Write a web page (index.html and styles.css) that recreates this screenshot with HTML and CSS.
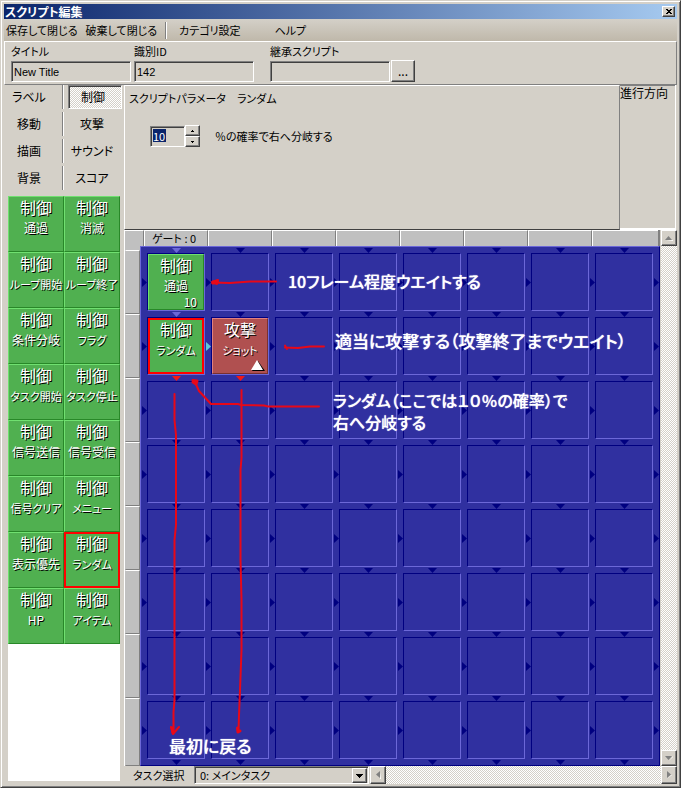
FILE: index.html
```html
<!DOCTYPE html>
<html lang="ja">
<head>
<meta charset="utf-8">
<title>スクリプト編集</title>
<link rel="stylesheet" href="styles.css">
</head>
<body>
<div class="window">
  <header class="titlebar">
    <h1>スクリプト編集</h1>
    <button class="close" type="button" aria-label="閉じる"><svg width="6" height="5" viewBox="0 0 6 5" shape-rendering="crispEdges"><path d="M0 0h2v1h2v-1h2v1h-1v1h-1v1h1v1h1v1h-2v-1h-2v1h-2v-1h1v-1h1v-1h-1v-1h-1z"/></svg></button>
  </header>
  <nav class="menubar">
    <button type="button">保存して閉じる</button>
    <button type="button">破棄して閉じる</button>
    <span class="divider"></span>
    <button type="button" class="wide">カテゴリ設定</button>
    <button type="button" class="wide">ヘルプ</button>
  </nav>
  <section class="fields">
    <div class="field"><label for="title">タイトル</label><input id="title" value="New Title"></div>
    <div class="field"><label for="ident">識別ID</label><input id="ident" value="142"></div>
    <div class="field parent"><label for="parent">継承スクリプト</label><input id="parent"></div>
    <button class="browse" type="button">...</button>
  </section>
  <div class="body">
    <aside class="side">
      <div class="tabs">
        <button type="button">ラベル</button><span class="divider"></span><button type="button" class="on">制御</button>
        <button type="button">移動</button><span class="divider"></span><button type="button">攻撃</button>
        <button type="button">描画</button><span class="divider"></span><button type="button">サウンド</button>
        <button type="button">背景</button><span class="divider"></span><button type="button">スコア</button>
      </div>
      <div class="palette">
        <button type="button" class="tile"><b>制御</b><span>通過</span></button>
        <button type="button" class="tile"><b>制御</b><span>消滅</span></button>
        <button type="button" class="tile kana"><b>制御</b><span>ループ開始</span></button>
        <button type="button" class="tile kana"><b>制御</b><span>ループ終了</span></button>
        <button type="button" class="tile"><b>制御</b><span>条件分岐</span></button>
        <button type="button" class="tile kana"><b>制御</b><span>フラグ</span></button>
        <button type="button" class="tile kana"><b>制御</b><span>タスク開始</span></button>
        <button type="button" class="tile kana"><b>制御</b><span>タスク停止</span></button>
        <button type="button" class="tile"><b>制御</b><span>信号送信</span></button>
        <button type="button" class="tile"><b>制御</b><span>信号受信</span></button>
        <button type="button" class="tile kana"><b>制御</b><span>信号クリア</span></button>
        <button type="button" class="tile kana"><b>制御</b><span>メニュー</span></button>
        <button type="button" class="tile"><b>制御</b><span>表示優先</span></button>
        <button type="button" class="tile kana selected"><b>制御</b><span>ランダム</span></button>
        <button type="button" class="tile"><b>制御</b><span>HP</span></button>
        <button type="button" class="tile kana"><b>制御</b><span>アイテム</span></button>
      </div>
    </aside>
    <main class="main">
      <div class="top">
        <section class="params">
          <h2>スクリプトパラメータ　ランダム</h2>
          <div class="chance">
            <input id="chance" value="10">
            <span class="spin">
              <button type="button" aria-label="増やす"><svg width="3" height="2" viewBox="0 0 3 2" shape-rendering="crispEdges"><path d="M1 0h1v1h1v1h-3v-1h1z"/></svg></button>
              <button type="button" aria-label="減らす"><svg width="3" height="2" viewBox="0 0 3 2" shape-rendering="crispEdges"><path d="M0 0h3v1h-1v1h-1v-1h-1z"/></svg></button>
            </span>
            <label for="chance">％の確率で右へ分岐する</label>
          </div>
        </section>
        <section class="direction">進行方向</section>
      </div>
      <div class="canvas">
        <div class="colheads"><span class="corner"></span><span>ゲート : 0</span><span></span><span></span><span></span><span></span><span></span><span></span><span></span></div>
        <div class="rowheads"><span></span><span></span><span></span><span></span><span></span><span></span><span></span><span></span></div>
        <div class="board">
          <div class="slots">
            <div class="slot lit-down"><div class="box"><div class="tile"><b>制御</b><span>通過</span><em>10</em></div></div></div><div class="slot"><div class="box"></div></div><div class="slot"><div class="box"></div></div><div class="slot"><div class="box"></div></div><div class="slot"><div class="box"></div></div><div class="slot"><div class="box"></div></div><div class="slot"><div class="box"></div></div><div class="slot"><div class="box"></div></div><div class="slot edge-right"></div>
            <div class="slot lit-down"><div class="box"><div class="tile kana selected"><b>制御</b><span>ランダム</span></div></div></div><div class="slot branch"><div class="box"><div class="tile kana attack"><b>攻撃</b><span>ショット</span><svg class="mark" width="14" height="11" viewBox="0 0 14 11"><path d="M7 1l7 10h-13z" fill="#000"/><path d="M6 0l6 10h-12z" fill="#fff"/></svg></div></div></div><div class="slot"><div class="box"></div></div><div class="slot"><div class="box"></div></div><div class="slot"><div class="box"></div></div><div class="slot"><div class="box"></div></div><div class="slot"><div class="box"></div></div><div class="slot"><div class="box"></div></div><div class="slot edge-right"></div>
            <div class="slot red-down"><div class="box"></div></div><div class="slot red-down"><div class="box"></div></div><div class="slot"><div class="box"></div></div><div class="slot"><div class="box"></div></div><div class="slot"><div class="box"></div></div><div class="slot"><div class="box"></div></div><div class="slot"><div class="box"></div></div><div class="slot"><div class="box"></div></div><div class="slot edge-right"></div>
            <div class="slot"><div class="box"></div></div><div class="slot"><div class="box"></div></div><div class="slot"><div class="box"></div></div><div class="slot"><div class="box"></div></div><div class="slot"><div class="box"></div></div><div class="slot"><div class="box"></div></div><div class="slot"><div class="box"></div></div><div class="slot"><div class="box"></div></div><div class="slot edge-right"></div>
            <div class="slot"><div class="box"></div></div><div class="slot"><div class="box"></div></div><div class="slot"><div class="box"></div></div><div class="slot"><div class="box"></div></div><div class="slot"><div class="box"></div></div><div class="slot"><div class="box"></div></div><div class="slot"><div class="box"></div></div><div class="slot"><div class="box"></div></div><div class="slot edge-right"></div>
            <div class="slot"><div class="box"></div></div><div class="slot"><div class="box"></div></div><div class="slot"><div class="box"></div></div><div class="slot"><div class="box"></div></div><div class="slot"><div class="box"></div></div><div class="slot"><div class="box"></div></div><div class="slot"><div class="box"></div></div><div class="slot"><div class="box"></div></div><div class="slot edge-right"></div>
            <div class="slot"><div class="box"></div></div><div class="slot"><div class="box"></div></div><div class="slot"><div class="box"></div></div><div class="slot"><div class="box"></div></div><div class="slot"><div class="box"></div></div><div class="slot"><div class="box"></div></div><div class="slot"><div class="box"></div></div><div class="slot"><div class="box"></div></div><div class="slot edge-right"></div>
            <div class="slot"><div class="box"></div></div><div class="slot"><div class="box"></div></div><div class="slot"><div class="box"></div></div><div class="slot"><div class="box"></div></div><div class="slot"><div class="box"></div></div><div class="slot"><div class="box"></div></div><div class="slot"><div class="box"></div></div><div class="slot"><div class="box"></div></div><div class="slot edge-right"></div>
            <div class="slot edge-bottom"></div><div class="slot edge-bottom"></div><div class="slot edge-bottom"></div><div class="slot edge-bottom"></div><div class="slot edge-bottom"></div><div class="slot edge-bottom"></div><div class="slot edge-bottom"></div><div class="slot edge-bottom"></div>
          </div>
          <svg class="strokes" width="520" height="520" viewBox="140 246 520 520" fill="none" stroke="#e80818" stroke-width="2" stroke-linecap="round" stroke-linejoin="round">
            <path d="M276 281.500L250 281.500L230 283L213 282.500M218 280L213 282.500L217 284"/>
            <path d="M213 282.500L217 281.500" stroke-width="4"/>
            <path d="M324 346.500L310 346.500L298 348L285 347.500M285 345.500L287 349"/>
            <path d="M319 406.500L268 406.500L264 405.500L241 405L238 404L211 404L199 391L195 382"/>
            <path d="M193 380.500L197 381L196 384L193 382" stroke-width="3"/>
            <path d="M174.500 394L174.500 420L176 435L176 525L174.500 540L174.500 700L173.500 712L173.500 733M171 727L173 734L179 727"/>
            <path d="M172 728L173 733" stroke-width="3"/>
            <path d="M241.500 390L241.500 458L240.500 470L240.500 560L241.500 600L241.500 650L240 690L239 715L238.500 731"/>
            <path d="M237.500 728L238 732L240 731" stroke-width="3"/>
          </svg>
          <p class="note note-wait">10フレーム程度ウエイトする</p>
          <p class="note large note-attack">適当に攻撃する（攻撃終了までウエイト）</p>
          <p class="note note-random">ランダム（ここでは１０％の確率）で<br>右へ分岐する</p>
          <p class="note large note-back">最初に戻る</p>
        </div>
        <div class="vscroll">
          <button type="button" aria-label="上へ"><svg width="8" height="5" viewBox="0 0 8 5"><path d="M1 5h7v-1z" fill="#fff"/><path d="M0 4l3.500-4l3.500 4z" fill="#808080"/></svg></button>
          <button type="button" aria-label="下へ"><svg width="8" height="5" viewBox="0 0 8 5"><path d="M4 5l4-4v-1z" fill="#fff"/><path d="M0 0h7l-3.500 4z" fill="#808080"/></svg></button>
        </div>
      </div>
      <div class="bottom">
        <label for="task">タスク選択</label>
        <div class="combo">
          <select id="task"><option>0: メインタスク</option></select>
          <span class="drop"><svg width="7" height="4" viewBox="0 0 7 4" shape-rendering="crispEdges"><path d="M0 0h7v1h-1v1h-1v1h-1v1h-1v-1h-1v-1h-1v-1h-1z"/></svg></span>
        </div>
        <div class="hscroll">
          <button type="button" aria-label="左へ"><svg width="5" height="8" viewBox="0 0 5 8"><path d="M5 1v7l-1 0z" fill="#fff"/><path d="M4 0v7l-4-3.500z" fill="#808080"/></svg></button>
          <button type="button" aria-label="右へ"><svg width="5" height="8" viewBox="0 0 5 8"><path d="M0 8l5-4h-1z" fill="#fff"/><path d="M0 0v7l4-3.500z" fill="#808080"/></svg></button>
        </div>
      </div>
    </main>
  </div>
</div>
</body>
</html>
```
FILE: styles.css
```css
* { box-sizing: border-box; }

:root {
  --face: #d4d0c8;
  --shade: #808080;
  --dark: #404040;
  --navy: #000080;
  --lilac: #6c68d8;
}

body {
  margin: 0;
  background: var(--face);
  color: #000;
  font: 12px/16px "Noto Sans CJK JP", "Liberation Sans", sans-serif;
  font-feature-settings: "palt";
}

button, input, select {
  margin: 0;
  padding: 0;
  border: 0;
  border-radius: 0;
  background: none;
  color: inherit;
  font: inherit;
  font-feature-settings: inherit;
}

svg { display: block; }

.window {
  display: flex;
  flex-direction: column;
  min-height: 100vh;
  padding: 3px 3px 2px;
  border: 1px solid;
  border-color: var(--face) var(--dark) var(--dark) var(--face);
  box-shadow: inset 1px 1px #fff, inset -1px -1px var(--shade);
}

.close, .browse, .spin button, .drop, .vscroll button, .hscroll button {
  display: flex;
  align-items: center;
  justify-content: center;
  background: var(--face);
  border: 1px solid;
  border-color: #fff var(--dark) var(--dark) #fff;
  box-shadow: inset -1px -1px var(--shade);
}

.titlebar {
  display: flex;
  align-items: center;
  justify-content: space-between;
  height: 15px;
  padding: 0 2px 0 1px;
  background: linear-gradient(90deg, #0a246a, #a6caf0);
}

.titlebar h1 {
  margin: 0;
  color: #fff;
  font-size: 12px;
  font-weight: 700;
  line-height: 15px;
}

.close { width: 13px; height: 11px; }

.menubar {
  display: flex;
  align-items: center;
  height: 22px;
  padding: 0 2px;
  gap: 8px;
  background: linear-gradient(#d4d0c8, #bfb8aa);
  font-size: 11px;
}

.menubar .wide { padding: 0 12px 0 4px; }
.menubar .wide + .wide { padding-left: 14px; }

.divider {
  width: 2px;
  height: 17px;
  border-left: 1px solid var(--shade);
  border-right: 1px solid #fff;
}

.fields {
  display: flex;
  align-items: flex-end;
  height: 44px;
  padding: 0 6px 2px;
  border: 1px solid;
  border-color: #fff var(--shade) var(--shade) #fff;
}

.field { width: 120px; margin-right: 3px; }
.field.parent { margin-left: 13px; margin-right: 1px; }
.field label { display: block; line-height: 16px; padding-bottom: 2px; font-size: 11px; }

.field input {
  display: block;
  width: 100%;
  height: 21px;
  padding: 0 2px;
  border: 1px solid;
  border-color: var(--shade) #fff #fff var(--shade);
  box-shadow: inset 1px 1px var(--dark);
  font-family: "Liberation Sans", sans-serif;
  font-size: 11px;
}

.browse { width: 24px; height: 22px; }

.body { display: flex; flex: 1; }

.side {
  display: flex;
  flex-direction: column;
  width: 116px;
  margin-right: 4px;
  padding: 0 0 4px 4px;
}

.tabs {
  display: grid;
  grid-template-columns: 50px 2px 54px;
  grid-auto-rows: 24px;
  column-gap: 4px;
  row-gap: 3px;
  align-items: center;
  margin-bottom: 6px;
}

.tabs button { height: 24px; padding-right: 8px; }
.tabs .divider { height: 24px; }
.tabs .divider + button { padding: 0 6px 0 0; }

.tabs .divider + .on {
  padding: 0 4px 0 0;
  border: 1px solid;
  border-color: var(--shade) #fff #fff var(--shade);
  box-shadow: inset 1px 1px var(--dark);
  background: repeating-conic-gradient(#fff 0 25%, #d4d0c8 0 50%) 0 0 / 2px 2px;
}

.palette {
  display: grid;
  grid-template-columns: repeat(2, 56px);
  grid-auto-rows: 56px;
  flex: 1;
  background: #fff;
}

.tile {
  display: flex;
  flex-direction: column;
  align-items: center;
  width: 56px;
  height: 56px;
  padding: 2px 0 0;
  border: 1px solid;
  border-color: #70e070 #288828 #288828 #70e070;
  background: #50b050;
  color: #fff;
  text-shadow: 1px 1px #000;
  white-space: nowrap;
}

.tile b { font-size: 16px; font-weight: 400; line-height: 16px; }
.tile span { margin-top: 5px; font-size: 12px; line-height: 16px; }
.tile.kana span { font-size: 11px; }
.tile em { align-self: flex-end; padding-right: 6px; font-style: normal; line-height: 16px; }
.tile .mark { align-self: flex-end; margin: 2px 2px 0 0; }
.tile.selected { border: 2px solid #f00; padding-top: 1px; }
.tile.attack { background: #b05050; border-color: #e08080 #783030 #783030 #e08080; }

.main { display: flex; flex-direction: column; flex: 1; min-width: 0; }

.top { display: flex; height: 145px; }

.params {
  flex: 1;
  padding: 4px;
  border: 1px solid;
  border-color: #fff var(--shade) var(--dark) #fff;
}

.params h2 { margin: 0; font-size: 11px; font-weight: 400; line-height: 16px; }

.chance { display: flex; align-items: center; padding: 19px 0 0 21px; }

.chance input {
  width: 35px;
  height: 21px;
  padding: 0 2px;
  border: 1px solid;
  border-color: var(--shade) #fff #fff var(--shade);
  box-shadow: inset 1px 1px var(--dark);
  background: linear-gradient(#0a246a, #0a246a) 2px 2px / 13px 13px no-repeat;
  color: #fff;
  font-size: 11px;
  line-height: 14px;
}

.spin { display: grid; margin-right: 15px; }
.spin button { width: 15px; height: 11px; }
.chance label { font-size: 11px; }

.direction {
  width: 56px;
  margin-right: 1px;
  border: solid #fff;
  border-width: 0 1px 2px 0;
  box-shadow: inset 0 1px var(--shade);
  white-space: nowrap;
}

.canvas {
  display: grid;
  grid-template-columns: 16px minmax(0, 1fr) 17px;
  grid-template-rows: 16px 520px;
}

.colheads { grid-column: 1 / 3; display: flex; overflow: hidden; background: #c0c0c0; border-right: 2px solid var(--shade); }

.colheads span {
  flex: 0 0 64px;
  padding-left: 7px;
  border: solid;
  border-width: 1px 1px 0;
  border-color: #fff var(--shade) #fff #fff;
  line-height: 15px;
  font-size: 11px;
}

.colheads .corner { flex-basis: 20px; }
.colheads span:last-child { flex: 1 1 0; border-right: 0; }

.rowheads { display: flex; flex-direction: column; padding-top: 4px; background: #c0c0c0; border-left: 1px solid #fff; }

.rowheads span {
  flex: 0 0 64px;
  border: 1px solid;
  border-color: #fff var(--shade) var(--shade) #c0c0c0;
}

.rowheads span:last-child { flex: 1; }

.board {
  position: relative;
  overflow: hidden;
  border: 1px solid;
  border-color: var(--lilac) var(--navy) var(--navy) var(--lilac);
  background: #3030a0;
}

.slots { display: grid; grid-template-columns: repeat(8, 64px) 6px; grid-template-rows: repeat(8, 64px) 6px; }

.slot { position: relative; padding: 6px 0 0 6px; --down: var(--navy); --right: var(--navy); }

.slot::before, .slot::after { content: ""; position: absolute; }

.slot::before {
  left: 31px;
  top: 1px;
  width: 9px;
  height: 5px;
  background: var(--down);
  clip-path: polygon(0 0, 100% 0, 50% 100%);
}

.slot::after {
  left: 1px;
  top: 31px;
  width: 5px;
  height: 9px;
  background: var(--right);
  clip-path: polygon(0 0, 100% 50%, 0 100%);
}

.lit-down { --down: var(--lilac); }
.red-down { --down: #f01818; }
.branch { --right: #60c8d8; }
.edge-right::before, .edge-bottom::after { display: none; }

.box {
  width: 58px;
  height: 58px;
  border: 1px solid;
  border-color: var(--navy) var(--lilac) var(--lilac) var(--navy);
}

.strokes { position: absolute; left: -1px; top: -1px; }

.note {
  position: absolute;
  margin: 0;
  color: #fff;
  font-size: 16px;
  font-weight: 500;
  line-height: 22px;
  text-shadow: 0 0 1px #fff;
  white-space: nowrap;
}

.note.large { font-size: 17px; }

.note-wait { left: 147px; top: 23px; }
.note-attack { left: 194px; top: 83px; }
.note-random { left: 192px; top: 142px; }
.note-back { left: 28px; top: 488px; }

.vscroll, .hscroll {
  display: flex;
  justify-content: space-between;
  background: repeating-conic-gradient(#fff 0 25%, #d4d0c8 0 50%) 0 0 / 2px 2px;
}

.vscroll { grid-area: 1 / 3 / 3 / 4; flex-direction: column; margin-left: 1px; }
.vscroll button { width: 16px; height: 16px; }

.bottom { display: flex; align-items: center; height: 18px; padding-left: 9px; font-size: 11px; }
.bottom label { width: 61px; }

.combo {
  display: flex;
  width: 175px;
  height: 18px;
  margin-right: 1px;
  padding: 1px;
  border: 1px solid;
  border-color: var(--shade) #fff #fff var(--shade);
  box-shadow: inset 1px 1px var(--dark);
}

.combo select { flex: 1; appearance: none; padding-left: 4px; line-height: 14px; }
.drop { width: 15px; height: 15px; }

.hscroll { flex: 1; height: 18px; }
.hscroll button { width: 16px; height: 18px; }
```
